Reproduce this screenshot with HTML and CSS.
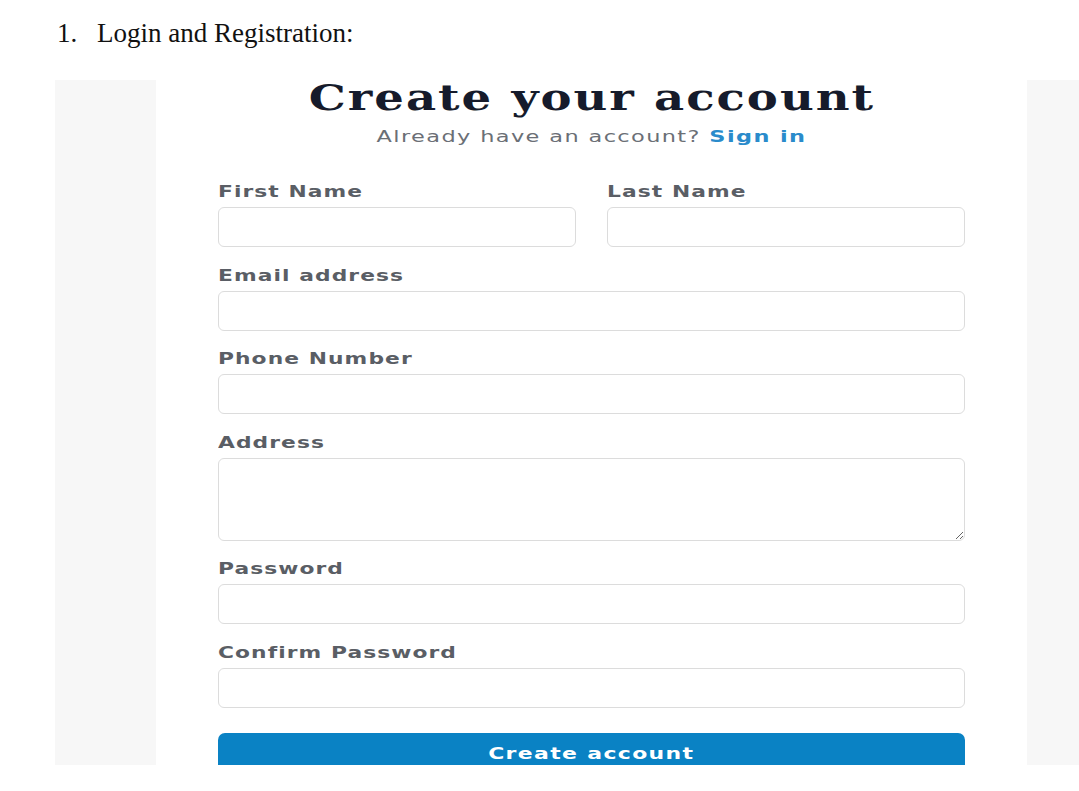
FILE: index.html
```html
<!DOCTYPE html>
<html lang="en">
<head>
<meta charset="utf-8">
<title>Login and Registration</title>
<link rel="stylesheet" href="styles.css">
</head>
<body>
<div class="doc">
  <h1 class="doc-item"><span class="num">1.</span><span class="item-text">Login and Registration:</span></h1>
  <div class="shot">
    <div class="side"></div>
    <div class="canvas">
      <form class="signup">
        <h2 class="title">Create your account</h2>
        <p class="sub">Already have an account? <a class="link">Sign in</a></p>
        <div class="fields">
          <div class="row two">
            <div class="field"><label class="label">First Name</label><input class="input" type="text"></div>
            <div class="field"><label class="label">Last Name</label><input class="input" type="text"></div>
          </div>
          <div class="field"><label class="label">Email address</label><input class="input" type="email"></div>
          <div class="field"><label class="label">Phone Number</label><input class="input" type="tel"></div>
          <div class="field"><label class="label">Address</label><textarea class="input area"></textarea></div>
          <div class="field"><label class="label">Password</label><input class="input" type="password"></div>
          <div class="field"><label class="label">Confirm Password</label><input class="input" type="password"></div>
        </div>
        <button class="submit" type="button"><span class="submit-text">Create account</span></button>
      </form>
    </div>
    <div class="side"></div>
  </div>
</div>
</body>
</html>
```

FILE: styles.css
```css
html, body {
  margin: 0;
  padding: 0;
  background: #ffffff;
}

.doc {
  padding: 15px 0 0 55px;
}

.doc-item {
  display: flex;
  margin: 0;
  padding-left: 2px;
  font-family: "Liberation Serif", "Times New Roman", serif;
  font-weight: normal;
  font-size: 27px;
  line-height: 36px;
  color: #111;
}

.num {
  width: 40px;
}

.shot {
  margin-top: 29px;
  height: 685px;
  display: grid;
  grid-template-columns: 101px 871px 1fr;
}

.side {
  background: #f7f7f7;
}

.canvas {
  background: #ffffff;
  padding: 0 62px;
}

.signup {
  display: flex;
  flex-direction: column;
}

.title {
  align-self: center;
  margin: 0;
  text-align: center;
  font-family: "DejaVu Serif", serif;
  font-weight: bold;
  font-size: 35px;
  line-height: 36px;
  letter-spacing: 1.5px;
  color: #161b2b;
  transform: scaleX(1.33);
}

.sub {
  align-self: center;
  margin: 11px 0 0;
  text-align: center;
  font-family: "DejaVu Sans", sans-serif;
  font-size: 16px;
  line-height: 20px;
  letter-spacing: 1px;
  color: #6b6f76;
  transform: scaleX(1.4);
}

.link {
  color: #2a8bcb;
  font-weight: bold;
}

.fields {
  margin-top: 35px;
  display: flex;
  flex-direction: column;
  gap: 18.6px;
}

.row.two {
  display: grid;
  grid-template-columns: 1fr 1fr;
  column-gap: 31px;
}

.field {
  display: flex;
  flex-direction: column;
  gap: 5px;
}

.label {
  align-self: flex-start;
  font-family: "DejaVu Sans", sans-serif;
  font-size: 16px;
  line-height: 20px;
  letter-spacing: 0.8px;
  font-weight: bold;
  color: #5a5e65;
  transform: scaleX(1.36);
  transform-origin: left center;
}

.input {
  box-sizing: border-box;
  height: 40px;
  width: 100%;
  margin: 0;
  border: 1.5px solid #dcdcdc;
  border-radius: 6px;
  background: #ffffff;
  font: inherit;
}

.area {
  height: 83px;
  resize: vertical;
}

.submit {
  box-sizing: border-box;
  margin-top: 25.5px;
  height: 32px;
  border: none;
  border-radius: 7px 7px 0 0;
  background: #0a82c4;
  color: #ffffff;
  font-family: "DejaVu Sans", sans-serif;
  font-weight: bold;
  font-size: 16px;
  line-height: 22px;
  padding: 10px 0 0;
}

.submit-text {
  display: inline-block;
  letter-spacing: 1px;
  transform: scaleX(1.37);
}
```
